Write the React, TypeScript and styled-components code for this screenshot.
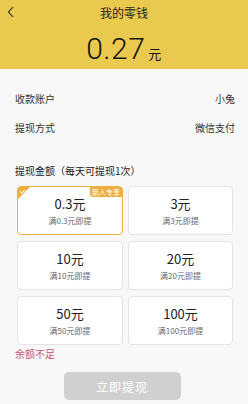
import React from "react";
import styled, { createGlobalStyle } from "styled-components";

const GlobalStyle = createGlobalStyle`
  html, body {
    margin: 0;
    padding: 0;
    background: #f8f8f8;
    font-family: "Noto Sans CJK SC", "Noto Sans", sans-serif;
    color: #222;
  }
`;

const Page = styled.div`
  width: 248px;
  height: 404px;
  overflow: hidden;
  background: #f8f8f8;
`;

const Header = styled.div`
  background: #eaca4e;
  height: 69px;
  display: flex;
  flex-direction: column;
  align-items: center;
`;

const TitleBar = styled.div`
  height: 26px;
  width: 100%;
  display: flex;
  align-items: center;
  justify-content: center;
  font-size: 12px;
  color: #222;
  position: relative;
`;

const Back = styled.svg`
  position: absolute;
  left: 7px;
  top: 6px;
`;

const Amount = styled.div`
  margin-top: 10px;
  display: flex;
  align-items: baseline;
  font-family: "Roboto", "Noto Sans", sans-serif;
  font-weight: 300;
  font-size: 30px;
  line-height: 30px;
  color: #111;
  letter-spacing: 0.5px;
`;

const Unit = styled.span`
  font-family: "Noto Sans CJK SC", sans-serif;
  font-weight: 400;
  font-size: 13px;
  margin-left: 3px;
`;

const Rows = styled.div`
  padding: 22px 13px 0 15px;
  display: flex;
  flex-direction: column;
  gap: 14px;
`;

const Row = styled.div`
  display: flex;
  justify-content: space-between;
  font-size: 10px;
  line-height: 15px;
  color: #333;
`;

const SectionTitle = styled.div`
  margin: 28px 0 0 15px;
  font-size: 10px;
  line-height: 15px;
  color: #222;
`;

const Grid = styled.div`
  margin: 8px 16px 0 17px;
  display: grid;
  grid-template-columns: 106px 105px;
  column-gap: 5px;
  row-gap: 6px;
`;

const Card = styled.div<{ $active?: boolean }>`
  position: relative;
  height: 49px;
  box-sizing: border-box;
  border: 1px solid ${(p) => (p.$active ? "#eeb043" : "#e4e4e4")};
  border-radius: 4px;
  background: #fff;
  display: flex;
  flex-direction: column;
  align-items: center;
  justify-content: center;
  overflow: hidden;
`;

const Value = styled.div`
  font-size: 13px;
  line-height: 17px;
  color: #222;
`;

const Hint = styled.div`
  margin-top: 4px;
  font-size: 8px;
  line-height: 10px;
  color: #666;
`;

const Badge = styled.div`
  position: absolute;
  top: 0;
  right: 0;
  background: #eeae43;
  color: #fff;
  font-size: 7px;
  line-height: 10px;
  padding: 0 2px;
  border-bottom-left-radius: 3px;
`;

const Corner = styled.svg`
  position: absolute;
  top: 0;
  left: 0;
`;

const Warn = styled.div`
  margin: 2px 0 0 15px;
  font-size: 10px;
  line-height: 14px;
  color: #c8566f;
`;

const ButtonWrap = styled.div`
  display: flex;
  justify-content: center;
  margin-top: 11px;
  padding-right: 4px;
`;

const Button = styled.button`
  width: 117px;
  height: 28px;
  border: none;
  border-radius: 5px;
  background: #d0d0d0;
  color: #fff;
  font-family: "Noto Sans CJK SC", sans-serif;
  font-size: 12px;
  letter-spacing: 1px;
  padding: 0;
`;

const options = [
  { v: "0.3元", h: "满0.3元即提", active: true },
  { v: "3元", h: "满3元即提" },
  { v: "10元", h: "满10元即提" },
  { v: "20元", h: "满20元即提" },
  { v: "50元", h: "满50元即提" },
  { v: "100元", h: "满100元即提" },
];

const App: React.FC = () => {
  return (
    <Page>
      <GlobalStyle />
      <Header>
        <TitleBar>
          <Back width="8" height="12" viewBox="0 0 8 12">
            <path d="M6 1 L1.5 6 L6 11" fill="none" stroke="#222" strokeWidth="1.1" />
          </Back>
          我的零钱
        </TitleBar>
        <Amount>
          0.27<Unit>元</Unit>
        </Amount>
      </Header>
      <Rows>
        <Row>
          <span>收款账户</span>
          <span>小兔</span>
        </Row>
        <Row>
          <span>提现方式</span>
          <span>微信支付</span>
        </Row>
      </Rows>
      <SectionTitle>提现金额（每天可提现1次）</SectionTitle>
      <Grid>
        {options.map((o) => (
          <Card key={o.v} $active={o.active}>
            {o.active && (
              <>
                <Corner width="13" height="13" viewBox="0 0 13 13">
                  <path d="M0 0 H12 L0 12 Z" fill="#eeae43" />
                  <path d="M2.2 4.6 L3.9 6 L6.8 2.8" fill="none" stroke="#fff" strokeWidth="1.1" />
                </Corner>
                <Badge>新人专享</Badge>
              </>
            )}
            <Value>{o.v}</Value>
            <Hint>{o.h}</Hint>
          </Card>
        ))}
      </Grid>
      <Warn>余额不足</Warn>
      <ButtonWrap>
        <Button>立即提现</Button>
      </ButtonWrap>
    </Page>
  );
};

export default App;
